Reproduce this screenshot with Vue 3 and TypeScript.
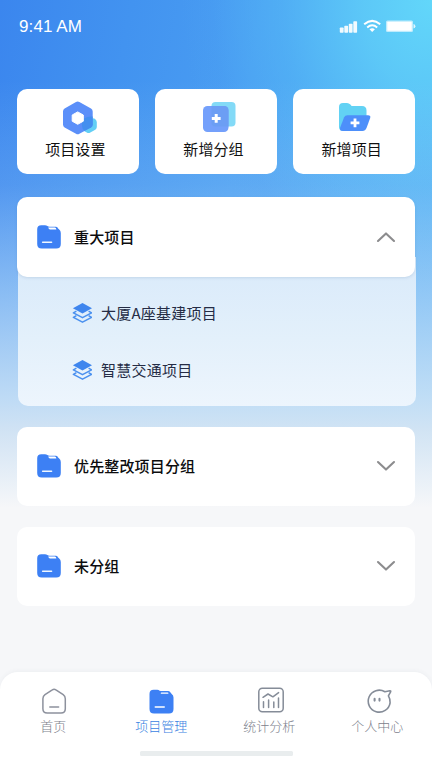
<script setup lang="ts">
import { ref } from 'vue'

interface Group {
  name: string
  items: string[]
}

const actions = ['项目设置', '新增分组', '新增项目']
const groups: Group[] = [
  { name: '重大项目', items: ['大厦A座基建项目', '智慧交通项目'] },
  { name: '优先整改项目分组', items: [] },
  { name: '未分组', items: [] },
]
const tabs = ['首页', '项目管理', '统计分析', '个人中心']
const openIndex = ref(0)
const activeTab = ref(1)

function toggle(index: number) {
  openIndex.value = openIndex.value === index ? -1 : index
}
</script>

<template>
  <div class="screen">
    <header class="status">
      <span class="time">9:41 AM</span>
      <svg class="signals" width="78" height="16" viewBox="0 .5 78 16" fill="#fff">
        <g opacity=".92">
          <rect x="1.8" y="9" width="3.8" height="5.2" rx=".7" />
          <rect x="6.3" y="7.3" width="3.8" height="6.9" rx=".7" />
          <rect x="10.8" y="5.3" width="3.8" height="8.9" rx=".7" />
          <rect x="15.3" y="2.8" width="3.8" height="11.4" rx=".7" />
        </g>
        <g fill="none" stroke="#fff" stroke-width="2">
          <path d="M26.2 5.8Q34.2-1 42.2 5.8" />
          <path d="M29.2 8.9Q34.2 4.7 39.2 8.9" />
        </g>
        <path d="M31.5 10.8Q34.2 8.6 36.9 10.8L34.2 13.5Z" />
        <rect x="48" y="2" width="27" height="11.6" rx="1.5" opacity=".6" />
        <rect x="49.3" y="3.3" width="24.4" height="9" rx=".6" />
        <path d="M75.5 5.5Q77.4 5.7 77.4 7.7T75.5 10Z" opacity=".8" />
      </svg>
    </header>

    <section class="actions">
      <button v-for="(label, i) in actions" :key="label" class="action">
        <svg v-if="i === 0" width="40" height="36" viewBox="-2 0 40 36">
          <path d="M26.5 17.5L34.2 15.3Q37 17 37 19V24Q37 25.8 35.5 26.7L30.5 29.6Q28.7 30.6 27 29.6L22 26.7Z" transform="translate(-.2 2)" fill="#62cff5" />
          <path d="M16 1.1Q17.7.1 19.4 1.1L31 7.5Q32.7 8.4 32.7 10.4V23.6Q32.7 25.5 31 26.4L19.4 32.7Q17.7 33.7 16 32.7L4.6 26.4Q3 25.5 3 23.6V10.4Q3 8.4 4.6 7.5Z" fill="#5b8ff9" />
          <path d="M24 17.5Q28 15 32.7 15.5V23.6Q32.7 25.5 31 26.4L24.5 29.8Q22 28 22 25V20.8Q22 18.8 24 17.5Z" fill="#438fef" />
          <path d="M17.7 10.9L23.3 14V20.2L17.7 23.3L12.2 20.2V14Z" fill="#fff" stroke="#fff" stroke-linejoin="round" />
        </svg>
        <svg v-else-if="i === 1" width="40" height="36" viewBox="-2 0 40 36">
          <rect x="13.5" y="1" width="24" height="24.5" rx="4" fill="#83daf7" />
          <rect x="5" y="5" width="25.5" height="26" rx="4.5" fill="#74a0fb" />
          <path d="M13.5 5H26Q30.5 5 30.5 9.5V25.5H17.5Q13.5 25.5 13.5 21.5Z" fill="#6c9ef4" />
          <path d="M18.2 13V21.8M13.8 17.4H22.6" stroke="#fff" stroke-width="3" />
        </svg>
        <svg v-else width="40" height="36" viewBox="1 0 40 36">
          <path d="M6 6Q6 2 10 2H14Q16 2 17.4 3.6L18.6 5H29Q33.5 5 33.5 9.5V24H6Z" fill="#62d2f4" />
          <path d="M6 14V26Q6 29.5 9.5 30L18 22Z" fill="#62d2f4" />
          <path d="M14.5 14.2H35Q38 14.2 37.2 17L33.5 27Q32.3 30 29.5 30H10Q6.2 30 7.2 26.5L11 16.5Q12 14.2 14.5 14.2Z" fill="#4d8ffa" />
          <path d="M22 17.4V26.2M17.6 21.8H26.4" stroke="#fff" stroke-width="2.8" />
        </svg>
        <span class="action-label">{{ label }}</span>
      </button>
    </section>

    <main class="groups">
      <section v-for="(group, i) in groups" :key="group.name" class="group">
        <div class="group-head" :class="{ raised: openIndex === i }" @click="toggle(i)">
          <svg class="folder" width="24" height="24" viewBox="0 0 24 24">
            <path d="M4.3.2H8Q9.4.2 10.4 1.1Q11.3 1.7 12.5 1.7H19Q20.6 1.7 21.1 3.4L22.2 4.4Q23.8 5.7 23.8 8V19Q23.8 23.5 19.3 23.5H4.7Q.2 23.5.2 19V4.3Q.2.2 4.3.2Z" fill="#3d80f4" />
            <path d="M11.2 2.6H17.8Q19 2.6 19.4 4.6H13Q11.8 4.4 11.2 2.6Z" fill="#fff" />
            <path d="M5.6 17.3H14.6" stroke="#f0f7ff" stroke-width="1.4" stroke-linecap="round" />
          </svg>
          <h2 class="group-name">{{ group.name }}</h2>
          <svg class="chevron" :class="{ up: openIndex === i }" width="20" height="12" viewBox="0 0 20 12">
            <path d="M2 2L10 9.6L18 2" fill="none" stroke="#8c8c8e" stroke-width="2.1" stroke-linecap="round" stroke-linejoin="round" />
          </svg>
        </div>
        <ul v-if="openIndex === i && group.items.length" class="items">
          <li v-for="item in group.items" :key="item" class="item">
            <svg width="20" height="20" viewBox="-.5 0 20 20">
              <path d="M10 0L19.6 5.2L10 10.4L.4 5.2Z" fill="#3f86ee" />
              <g fill="none" stroke="#4a90ef" stroke-width="1.5" stroke-linejoin="round">
                <path d="M3.9 8.2L.9 9.9L10 14.7L19.1 9.9L16.1 8.2" />
                <path d="M3.9 12.6L.9 14.4L10 19.2L19.1 14.4L16.1 12.6" />
              </g>
            </svg>
            <span>{{ item }}</span>
          </li>
        </ul>
      </section>
    </main>

    <nav class="tabbar">
      <div class="tabs">
        <a v-for="(tab, i) in tabs" :key="tab" class="tab" :class="{ active: activeTab === i }" @click="activeTab = i">
          <svg v-if="i === 0" width="28" height="28" viewBox="0 0 28 28" fill="none" stroke="#8d919d" stroke-width="1.5" stroke-linecap="round">
            <path d="M12.3 2.9Q14.1 1.6 15.9 2.9L23.2 7.7Q25.3 9.2 25.3 11.7V21.7Q25.3 26 21 26H7.2Q2.9 26 2.9 21.7V11.7Q2.9 9.2 5 7.7Z" />
            <path d="M9.8 20H18.6" />
          </svg>
          <svg v-else-if="i === 1" width="28" height="28" viewBox="-1.3 -2.6 28 28">
            <path d="M4.3.2H8Q9.4.2 10.4 1.1Q11.3 1.5 12.5 1.5H19Q20.6 1.5 21.4 3.2L22.4 4.4Q24.2 5.7 24.2 8V19.5Q24.2 24 19.7 24H4.7Q.2 24 .2 19.5V4.3Q.2.2 4.3.2Z" fill="#3d80f4" />
            <path d="M12.1 3.6H18.5M5.9 17.4H15" stroke="#fff" stroke-width="1.3" stroke-linecap="round" />
          </svg>
          <svg v-else-if="i === 2" width="28" height="28" viewBox="0 0 28 28" fill="none" stroke="#858c98" stroke-width="1.5" stroke-linecap="round" stroke-linejoin="round">
            <rect x="2.8" y="1.2" width="24.4" height="23.5" rx="3.5" />
            <path d="M7.5 14.7V20.5M12.6 13V20.5M17.8 15V20.5M22.5 11V20.5" />
            <path d="M7 10.3L12 7L16.9 9.8L22.6 5.6" />
          </svg>
          <svg v-else width="28" height="28" viewBox="-.4 -.6 28 28" fill="none" stroke="#858c98" stroke-width="1.6" stroke-linecap="round" stroke-linejoin="round">
            <path d="M20.5 4.1L25.5 3.1Q26.7 3 26.2 4.2L24 8.3Q26 11.5 25.7 15.2A11 11 0 1 1 20.5 4.1" />
            <path d="M10.2 11.3V13M15.1 11.3V13" stroke-width="2.1" />
          </svg>
          <span class="tab-label">{{ tab }}</span>
        </a>
      </div>
      <div class="home-bar"></div>
    </nav>
  </div>
</template>

<style>
body {
  margin: 0;
}
</style>

<style scoped>
.screen {
  display: flex;
  flex-direction: column;
  box-sizing: border-box;
  width: 432px;
  height: 768px;
  overflow: hidden;
  font-family: "Noto Sans CJK SC", sans-serif;
  background:
    linear-gradient(180deg, rgba(205, 232, 248, 0) 80px, rgba(205, 232, 248, .15) 185px, rgba(205, 232, 248, .52) 290px, rgba(209, 230, 246, .88) 400px, rgba(216, 231, 244, .95) 430px, #f6f7f9 508px),
    radial-gradient(250px 330px at 432px 0, #62d7fa 0, rgba(94, 204, 248, .9) 28%, rgba(84, 184, 246, .6) 60%, rgba(76, 163, 243, .2) 88%, rgba(74, 158, 242, 0) 100%),
    linear-gradient(100deg, #3b86ee 0, #4293f0 130px, #4a9ef2 260px, #4fa5f3 100%);
}

.status {
  display: flex;
  flex: none;
  justify-content: space-between;
  align-items: center;
  height: 53px;
  padding: 0 16px 0 19px;
  color: #fff;
}

.time {
  font: 17px/20px "Liberation Sans", Arial, sans-serif;
  letter-spacing: .1px;
}

.actions {
  display: grid;
  flex: none;
  grid-template-columns: repeat(3, 1fr);
  gap: 16.5px;
  padding: 36px 17px 0;
}

.action {
  display: flex;
  flex-direction: column;
  align-items: center;
  height: 84.5px;
  padding: 12px 0 0;
  border: 0;
  border-radius: 10px;
  background: #fff;
  font-family: inherit;
}

.action-label {
  margin: 1px 5px 0 0;
  color: #111;
  font-size: 15px;
  line-height: 22px;
  letter-spacing: .1px;
}

.groups {
  display: flex;
  flex: 1;
  flex-direction: column;
  gap: 20.5px;
  padding: 23.5px 17px 0;
}

.group-head {
  display: flex;
  align-items: center;
  box-sizing: border-box;
  height: 79.5px;
  padding: 0 19px 0 20px;
  border-radius: 10px;
  background: #fff;
}

.raised {
  position: relative;
  z-index: 1;
  box-shadow: 0 1px 3px rgba(60, 100, 150, .16);
}

.group-name {
  flex: 1;
  margin: 0 0 0 13px;
  color: #0c0c0e;
  font-size: 15px;
  font-weight: 500;
  line-height: 22px;
  letter-spacing: .15px;
}

.chevron.up {
  transform: rotate(180deg);
}

.items {
  display: flex;
  flex-direction: column;
  gap: 35px;
  box-sizing: border-box;
  height: 149px;
  margin: -19.5px -1px 0 1px;
  padding: 44.5px 0 0 54px;
  border-radius: 0 0 10px 10px;
  background: linear-gradient(180deg, #d9eafa, #e3f0fb 55%, #edf5fd);
  list-style: none;
}

.item {
  display: flex;
  align-items: center;
  gap: 9px;
  height: 22px;
  color: #252c45;
  font-size: 15px;
  line-height: 22px;
  letter-spacing: .25px;
}

.tabbar {
  flex: none;
  box-sizing: border-box;
  height: 96px;
  padding-top: 15px;
  border-radius: 18px 18px 0 0;
  background: #fff;
  box-shadow: 0 -1px 4px rgba(60, 70, 90, .05);
}

.tabs {
  display: grid;
  grid-template-columns: repeat(4, 108px);
}

.tab {
  display: flex;
  flex-direction: column;
  align-items: center;
  color: #7d818c;
}

.tab.active {
  color: #3a7fe2;
}

.tab-label {
  margin: 1px 1.5px 0 0;
  font-size: 13px;
  font-weight: 300;
  line-height: 20px;
}

.home-bar {
  width: 153px;
  height: 5px;
  margin: 15px auto 0;
  border-radius: 1.5px;
  background: #e9edee;
}
</style>
